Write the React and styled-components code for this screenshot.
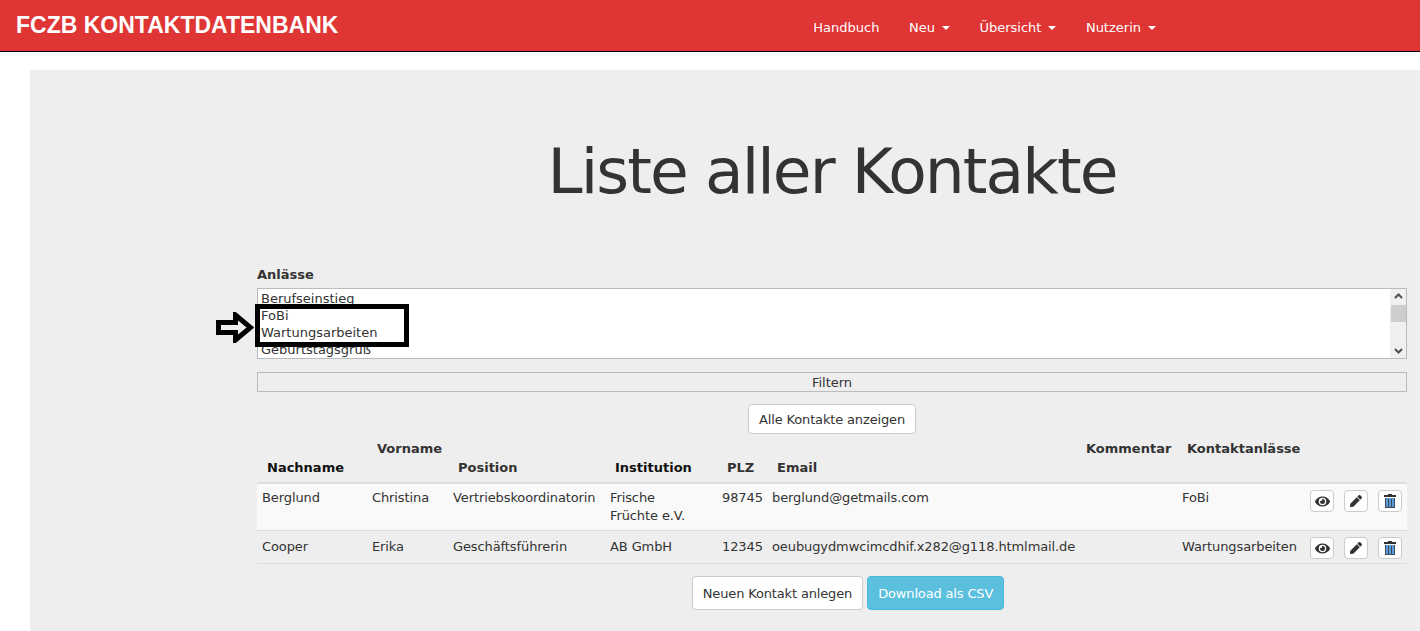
import React from 'react';
import styled, { createGlobalStyle } from 'styled-components';
import { FaEye, FaPen } from 'react-icons/fa';

const GlobalStyle = createGlobalStyle`
	html, body {
		margin: 0;
		height: 100%;
		overflow: hidden;
		background: #fff;
		font-family: 'DejaVu Sans', Verdana, sans-serif;
		font-size: 13px;
		color: #333;
	}
`;

// Navbar
const Navbar = styled.nav`
	height: 51px;
	box-sizing: content-box;
	display: flex;
	align-items: center;
	justify-content: space-between;
	background: #e03535;
	border-bottom: 1px solid #000;
	padding: 0 264px 0 16px;
`;

const Brand = styled.a`
	font-family: 'Liberation Sans', Arial, sans-serif;
	font-weight: 700;
	font-size: 23px;
	color: #fff;
`;

const NavList = styled.div`
	display: flex;
	gap: 29.5px;
	margin-top: 4px;
`;

const NavItem = styled.a`
	color: #fff;
	font-size: 13px;
	display: flex;
	align-items: center;
`;

const Caret = styled.span`
	width: 0;
	height: 0;
	margin-left: 7px;
	border-top: 4px solid #fff;
	border-left: 4px solid transparent;
	border-right: 4px solid transparent;
`;

// Main area
const Jumbotron = styled.main`
	margin: 18px 0 0 30px;
	height: 561px;
	background: #eee;
	padding: 0 13px 0 227px;
	display: flex;
	flex-direction: column;
`;

const Title = styled.h1`
	margin: 62px 0 0;
	font-size: 63px;
	font-weight: 400;
	line-height: 80px;
	letter-spacing: -1.9px;
	text-align: center;
	color: #333;
`;

const FilterLabel = styled.label`
	margin-top: 54px;
	display: block;
	font-weight: 700;
	line-height: 17px;
`;

const ListWrap = styled.div`
	position: relative;
	margin-top: 5px;
`;

const ListBox = styled.div`
	height: 71px;
	box-sizing: border-box;
	border: 1px solid #bbb;
	background: #fff;
	display: flex;
	justify-content: space-between;
	overflow: hidden;
`;

const Options = styled.div`
	padding: 1px 3px;
	line-height: 17px;
	color: #333;
`;

const Scrollbar = styled.div`
	width: 16px;
	background: #f0f0f0;
	display: flex;
	flex-direction: column;
	justify-content: space-between;
	align-items: center;
`;

const ScrollThumb = styled.div`
	position: absolute;
	right: 1px;
	top: 17px;
	width: 15px;
	height: 17px;
	background: #cdcdcd;
`;

const Marker = styled.div`
	position: absolute;
	left: -2px;
	top: 16px;
	width: 154px;
	height: 43px;
	box-sizing: border-box;
	border: 5px solid #000;
`;

const MarkerArrow = styled.svg`
	position: absolute;
	left: -41px;
	top: 24px;
`;

const FilterButton = styled.button`
	margin-top: 13px;
	height: 20px;
	border: 1px solid #bbb;
	background: #eee;
	color: #333;
	font: inherit;
	padding: 0;
`;

const ShowAll = styled.div`
	margin-top: 12px;
	display: flex;
	justify-content: center;
`;

const Button = styled.button`
	height: ${(p) => p.$height}px;
	padding: 0 10px;
	border: 1px solid ${(p) => (p.$info ? '#46b8da' : '#ccc')};
	border-radius: 4px;
	background: ${(p) => (p.$info ? '#5bc0de' : '#fff')};
	color: ${(p) => (p.$info ? '#fff' : '#333')};
	font: inherit;
	letter-spacing: -0.15px;
`;

const Table = styled.table`
	margin-top: 6px;
	width: 1150px;
	table-layout: fixed;
	border-collapse: collapse;
`;

const HeadCell = styled.th`
	height: 43px;
	padding: 0 ${(p) => (p.$tight ? '0 6px 5px' : '10px 6px')};
	box-sizing: border-box;
	border-bottom: 2px solid #ddd;
	font-weight: 700;
	text-align: left;
	vertical-align: ${(p) => (p.$raised ? 'top' : 'bottom')};
	color: ${(p) => (p.$dark ? '#111' : '#333')};
	line-height: 17px;
	white-space: nowrap;
`;

const Cell = styled.td`
	padding: 5px 5px 5px;
	line-height: 18px;
	vertical-align: top;
	color: #333;
	letter-spacing: -0.1px;
`;

const InstitutionCell = styled(Cell)`
	padding-right: 18px;
`;

const ActionCell = styled.td`
	padding: 6px 0 4px 5px;
	vertical-align: top;
`;

const Row = styled.tr`
	background: ${(p) => (p.$striped ? '#f9f9f9' : 'transparent')};
	border-bottom: 1px solid #ddd;

	&:last-child ${Cell} {
		padding-top: 7px;
	}
`;

const Actions = styled.div`
	display: flex;
	gap: 10px;
`;

const IconButton = styled.button`
	width: 24px;
	height: 22px;
	padding: 0;
	border: 1px solid #ccc;
	border-radius: 4px;
	background: #fff;
	color: #333;
	display: flex;
	align-items: center;
	justify-content: center;
	font-size: ${(p) => p.$size || 12}px;
`;

const Footer = styled.div`
	margin-top: 12px;
	padding-left: 32px;
	display: flex;
	justify-content: center;
	gap: 4px;
`;

function TrashIcon() {
	return (
		<svg width="12" height="14" viewBox="0 0 12 14">
			<path fill="#333" d="M4 0h4v1h4v2H0V1h4z" />
			<path fill="#5a9bdc" d="M1 4h10v10H1z" />
			<path fill="#3f4a55" d="M1 4h1v10H1zM10 4h1v10h-1zM4 5h1v8H4zM7 5h1v8H7zM1 13h10v1H1z" />
		</svg>
	);
}

function Chevron({ up }) {
	return (
		<svg width="9" height="6" viewBox="0 0 9 6" style={{ margin: '4px 0' }}>
			<path
				d={up ? 'M1 5l3.5-3.5L8 5' : 'M1 1l3.5 3.5L8 1'}
				fill="none"
				stroke="#505050"
				strokeWidth="2"
			/>
		</svg>
	);
}

const contacts = [
	{
		last: 'Berglund',
		first: 'Christina',
		position: 'Vertriebskoordinatorin',
		institution: 'Frische Früchte e.V.',
		plz: '98745',
		email: 'berglund@getmails.com',
		occasion: 'FoBi',
		striped: true,
	},
	{
		last: 'Cooper',
		first: 'Erika',
		position: 'Geschäftsführerin',
		institution: 'AB GmbH',
		plz: '12345',
		email: 'oeubugydmwcimcdhif.x282@g118.htmlmail.de',
		occasion: 'Wartungsarbeiten',
	},
];

const columns = [110, 81, 157, 112, 50, 314, 96, 128, 102];

export default function App() {
	return (
		<>
			<GlobalStyle />
			<Navbar>
				<Brand>FCZB KONTAKTDATENBANK</Brand>
				<NavList>
					<NavItem>Handbuch</NavItem>
					<NavItem>
						Neu
						<Caret />
					</NavItem>
					<NavItem>
						Übersicht
						<Caret />
					</NavItem>
					<NavItem>
						Nutzerin
						<Caret />
					</NavItem>
				</NavList>
			</Navbar>
			<Jumbotron>
				<Title>Liste aller Kontakte</Title>
				<FilterLabel>Anlässe</FilterLabel>
				<ListWrap>
					<ListBox>
						<Options>
							<div>Berufseinstieg</div>
							<div>FoBi</div>
							<div>Wartungsarbeiten</div>
							<div>Geburtstagsgruß</div>
						</Options>
						<Scrollbar>
							<Chevron up />
							<Chevron />
						</Scrollbar>
					</ListBox>
					<ScrollThumb />
					<Marker />
					<MarkerArrow width="38" height="31" viewBox="0 0 38 31">
						<path
							d="M2.5 10.5h17V3l15 12.5-15 12.5v-7.500h-17z"
							fill="none"
							stroke="#000"
							strokeWidth="5"
						/>
					</MarkerArrow>
				</ListWrap>
				<FilterButton>Filtern</FilterButton>
				<ShowAll>
					<Button $height={30}>Alle Kontakte anzeigen</Button>
				</ShowAll>
				<Table>
					<colgroup>
						{columns.map((width, i) => (
							<col key={i} style={{ width }} />
						))}
					</colgroup>
					<thead>
						<tr>
							<HeadCell $dark>Nachname</HeadCell>
							<HeadCell $raised>Vorname</HeadCell>
							<HeadCell>Position</HeadCell>
							<HeadCell $dark>Institution</HeadCell>
							<HeadCell>PLZ</HeadCell>
							<HeadCell>Email</HeadCell>
							<HeadCell $raised $tight>Kommentar</HeadCell>
							<HeadCell $raised>Kontaktanlässe</HeadCell>
							<HeadCell />
						</tr>
					</thead>
					<tbody>
						{contacts.map((c) => (
							<Row key={c.last} $striped={c.striped}>
								<Cell>{c.last}</Cell>
								<Cell>{c.first}</Cell>
								<Cell>{c.position}</Cell>
								<InstitutionCell>{c.institution}</InstitutionCell>
								<Cell>{c.plz}</Cell>
								<Cell>{c.email}</Cell>
								<Cell />
								<Cell>{c.occasion}</Cell>
								<ActionCell>
									<Actions>
										<IconButton $size={15}><FaEye /></IconButton>
										<IconButton $size={12}><FaPen /></IconButton>
										<IconButton><TrashIcon /></IconButton>
									</Actions>
								</ActionCell>
							</Row>
						))}
					</tbody>
				</Table>
				<Footer>
					<Button $height={34}>Neuen Kontakt anlegen</Button>
					<Button $height={34} $info>Download als CSV</Button>
				</Footer>
			</Jumbotron>
		</>
	);
}
